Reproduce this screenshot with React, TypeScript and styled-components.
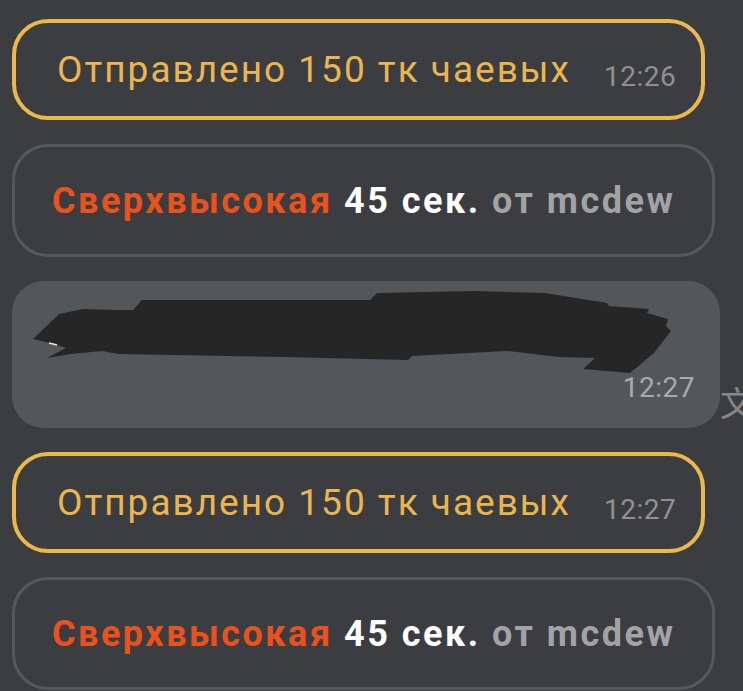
import React from "react";
import styled, { createGlobalStyle } from "styled-components";

const Global = createGlobalStyle`
  html, body { margin: 0; padding: 0; background: #3c3d41; }
  body { font-family: Roboto, "Noto Sans", sans-serif; overflow: hidden; }
`;

const Feed = styled.div`
  display: flex;
  flex-direction: column;
  gap: 24px;
  padding: 19px 0 0 12px;
  width: 743px;
  height: 691px;
  box-sizing: border-box;
  overflow: hidden;
`;

const Row = styled.div`
  display: flex;
  align-items: flex-end;
  gap: 0;
`;

const TipBubble = styled.div`
  box-sizing: border-box;
  width: 693px;
  height: 101px;
  flex-shrink: 0;
  border: 4px solid #ecb84b;
  border-radius: 36px;
  display: flex;
  align-items: center;
  padding: 0 0 0 41px;
  gap: 33px;
`;

const TipText = styled.span`
  color: #ebb64f;
  font-size: 37px;
  letter-spacing: 2px;
  line-height: 1;
  white-space: nowrap;
`;

const Time = styled.span`
  color: #8f9195;
  font-size: 28px;
  line-height: 1;
  white-space: nowrap;
`;

const TipTime = styled(Time)`
  margin-top: 14px;
  letter-spacing: 0.5px;
`;

const LevelBubble = styled.div`
  box-sizing: border-box;
  width: 703px;
  height: 113px;
  flex-shrink: 0;
  border: 3px solid #56585c;
  border-radius: 36px;
  display: flex;
  align-items: center;
  padding: 0 0 0 37px;
`;

const LevelText = styled.span`
  font-size: 36px;
  font-weight: 700;
  letter-spacing: 2.5px;
  line-height: 1;
  white-space: nowrap;
`;

const Part = styled.span<{ $c: string }>`
  color: ${(p) => p.$c};
`;

const MsgBubble = styled.div`
  box-sizing: border-box;
  width: 708px;
  height: 147px;
  flex-shrink: 0;
  background: #54575a;
  border-radius: 32px;
  display: flex;
  flex-direction: column;
  padding: 0 25px 26px 0;
`;

const Redaction = styled.svg`
  display: block;
  width: 708px;
  height: 93px;
  flex-shrink: 0;
`;

const MsgTime = styled(Time)`
  align-self: flex-end;
  color: #a9abad;
  letter-spacing: 0.5px;
`;

const Translate = styled.span`
  font-family: "Noto Sans CJK SC", sans-serif;
  color: #85878a;
  font-size: 34px;
  line-height: 1;
  margin-bottom: 9px;
  white-space: nowrap;
`;

const Tip = ({ time }: { time: string }) => (
  <TipBubble>
    <TipText>Отправлено 150 тк чаевых</TipText>
    <TipTime>{time}</TipTime>
  </TipBubble>
);

const Level = () => (
  <LevelBubble>
    <LevelText>
      <Part $c="#e9511d">Сверхвысокая</Part> <Part $c="#ffffff">45 сек.</Part>{" "}
      <Part $c="#a2a3a5">от mcdew</Part>
    </LevelText>
  </LevelBubble>
);

export default function App() {
  return (
    <>
      <Global />
      <Feed>
        <Tip time="12:26" />
        <Level />
        <Row>
          <MsgBubble>
            <Redaction viewBox="0 0 708 93">
              <polygon
                fill="#262626"
                points="21,58 47,33 71,28 104,29 121,29 130,19 358,19 365,12 462,10 533,12 595,22 597,25 637,28 635,32 656,38 654,45 659,50 642,72 618,92 571,88 583,77 547,76 495,70 400,75 396,79 272,76 106,73 90,70 59,73 35,77 54,67 38,62"
              />
              <path d="M37 62 L45 64" stroke="#e8e8e8" strokeWidth="1.5" />
            </Redaction>
            <MsgTime>12:27</MsgTime>
          </MsgBubble>
          <Translate>文</Translate>
        </Row>
        <Tip time="12:27" />
        <Level />
      </Feed>
    </>
  );
}
